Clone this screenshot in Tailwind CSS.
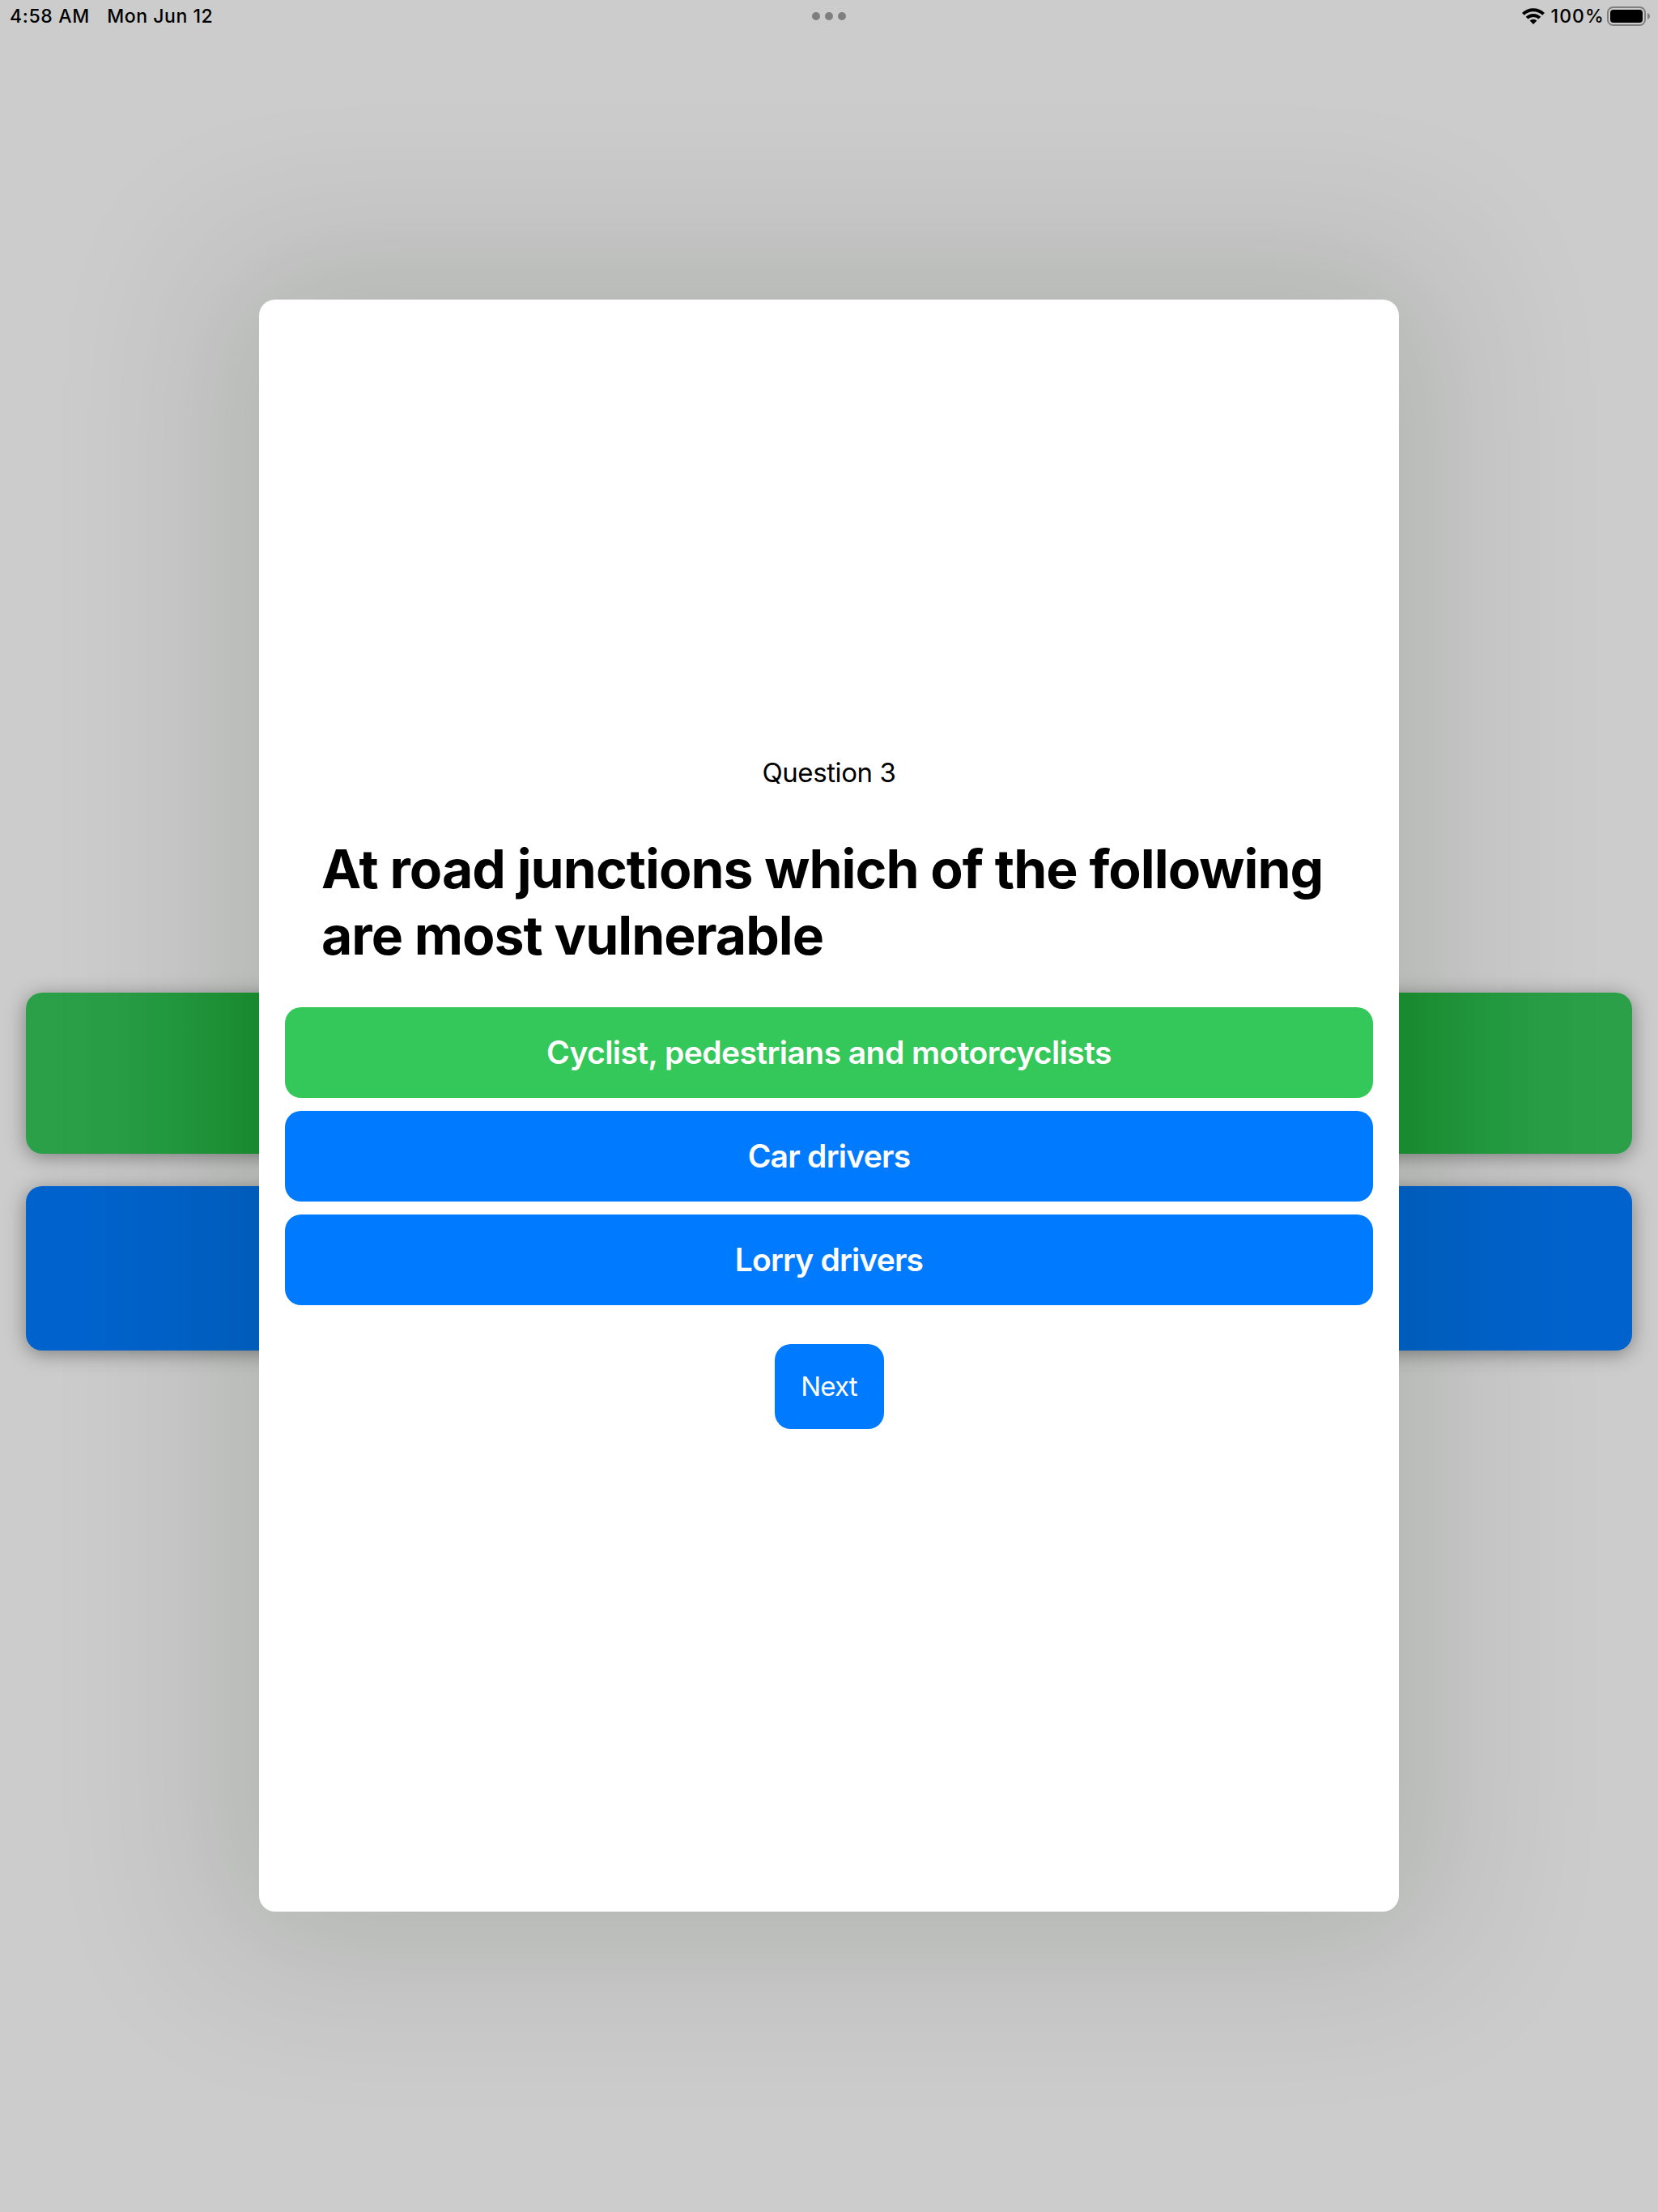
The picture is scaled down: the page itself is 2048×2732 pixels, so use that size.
<!DOCTYPE html>
<html lang="en">
<head>
<meta charset="utf-8">
<title>Quiz</title>
<script src="https://cdn.jsdelivr.net/npm/@tailwindcss/browser@4"></script>
</head>
<body class="font-['Inter',sans-serif] text-black">
<div class="relative flex h-[2732px] w-[2048px] flex-col overflow-hidden bg-[#cccccc]">
  <!-- Page behind the sheet -->
  <main class="flex flex-col gap-10 px-8 pt-[1226px]">
    <div class="h-[199px] rounded-[20px] bg-[linear-gradient(90deg,#2ba048_0px,#299f47_110px,#239c40_190px,#1c9433_288px,#1c9433_1696px,#239c40_1794px,#299f47_1874px,#2ba048_1984px)] shadow-[0_4px_24px_rgba(0,0,0,0.38)]"></div>
    <div class="h-[203px] rounded-[20px] bg-[#0063cd] shadow-[0_4px_24px_rgba(0,0,0,0.38)]"></div>
  </main>

  <!-- Sheet -->
  <div class="absolute inset-0 flex items-start justify-center pt-[370px]">
    <section class="flex h-[1991px] w-[1408px] flex-col rounded-[20px] bg-white px-8 pt-[564px] shadow-[0_0_200px_60px_rgba(10,34,4,0.125)]">
      <p class="text-center text-[33px] leading-10 tracking-[-0.4px]">Question 3</p>
      <h1 class="mt-[58px] pl-[45px] text-[66px] leading-[82px] font-bold tracking-[-0.945px] whitespace-nowrap">At road junctions which of the following<br>are most vulnerable</h1>
      <div class="mt-12 flex flex-col gap-4 text-[39px] font-semibold text-white">
        <button class="h-28 rounded-[20px] bg-[#34c759] tracking-[-0.56px]">Cyclist, pedestrians and motorcyclists</button>
        <button class="h-28 rounded-[20px] bg-[#007aff] tracking-[-0.75px]">Car drivers</button>
        <button class="h-28 rounded-[20px] bg-[#007aff] tracking-[-0.82px]">Lorry drivers</button>
      </div>
      <button class="mt-12 h-[105px] w-[135px] self-center rounded-[20px] bg-[#007aff] text-[33px] tracking-[-0.8px] text-white">Next</button>
    </section>
  </div>

  <!-- Status bar -->
  <header class="absolute inset-x-0 top-0 grid h-10 grid-cols-3 items-center text-[23px] leading-10 font-medium">
    <div class="flex gap-[21.5px] pl-3">
      <span class="tracking-[0.66px]">4:58 AM</span>
      <span class="tracking-[0.54px]">Mon Jun 12</span>
    </div>
    <div class="flex justify-center gap-1.5">
      <i class="size-2.5 rounded-full bg-[#7f7f7f]"></i>
      <i class="size-2.5 rounded-full bg-[#7f7f7f]"></i>
      <i class="size-2.5 rounded-full bg-[#7f7f7f]"></i>
    </div>
    <div class="flex items-center justify-end pr-2.5">
      <svg class="mr-2 h-5 w-7" viewBox="0 0 28 20">
        <g fill="none" stroke="#000" stroke-width="4">
          <path d="M1.400 7.400a17.8 17.8 0 0 1 25.2 0"/>
          <path d="M6.100 12.200a11.2 11.2 0 0 1 15.800 0"/>
        </g>
        <path d="M14 20l-4.400-4.400a6.200 6.200 0 0 1 8.800 0z"/>
      </svg>
      <span class="w-[69.500px] tracking-[1.1px]">100%</span>
      <svg class="h-6 w-[53px]" viewBox="0 0 53 24">
        <rect x="1" y="1" width="46" height="22" rx="6.5" fill="none" stroke="#7f7f7f" stroke-width="2"/>
        <rect x="4" y="4" width="40" height="16" rx="4"/>
        <path d="M50 8c2 .8 3 2.200 3 4s-1 3.200-3 4z" fill="#7f7f7f"/>
      </svg>
    </div>
  </header>
</div>
</body>
</html>
